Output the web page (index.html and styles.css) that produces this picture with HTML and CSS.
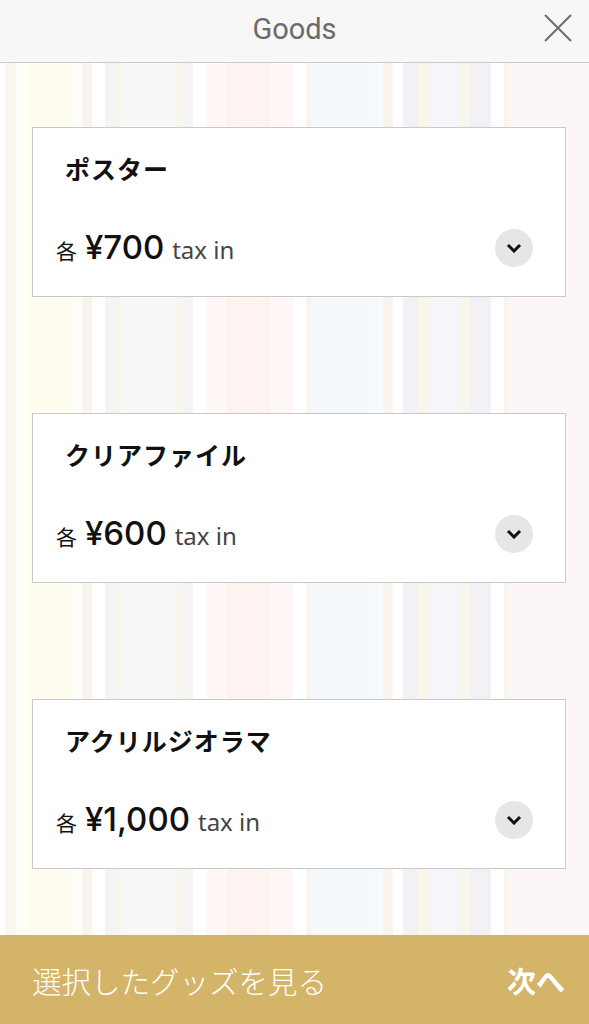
FILE: index.html
```html
<!DOCTYPE html>
<html lang="ja">
<head>
    <meta charset="UTF-8">
    <meta name="viewport" content="width=device-width, initial-scale=1.0">
    <title>Goods</title>
    <link rel="stylesheet" href="styles.css">
</head>
<body>
    <div class="page">
        <header class="top-bar">
            <h1>Goods</h1>
            <button class="close-btn" aria-label="close">
                <svg width="30" height="30" viewBox="0 0 30 30">
                    <path d="M2 2 L28 28 M28 2 L2 28" stroke="#6e6e6e" stroke-width="2" fill="none"/>
                </svg>
            </button>
        </header>

        <main class="goods-list">
            <div class="goods-card">
                <p class="goods-name">ポスター</p>
                <div class="price-row">
                    <p class="price"><span class="each">各</span> <span class="amount">¥700</span> <span class="tax">tax in</span></p>
                    <button class="toggle-btn" aria-label="open">
                        <svg width="16" height="10" viewBox="0 0 16 10">
                            <polyline points="2,2 8,8 14,2" stroke="#111" stroke-width="3" fill="none"/>
                        </svg>
                    </button>
                </div>
            </div>

            <div class="goods-card">
                <p class="goods-name">クリアファイル</p>
                <div class="price-row">
                    <p class="price"><span class="each">各</span> <span class="amount">¥600</span> <span class="tax">tax in</span></p>
                    <button class="toggle-btn" aria-label="open">
                        <svg width="16" height="10" viewBox="0 0 16 10">
                            <polyline points="2,2 8,8 14,2" stroke="#111" stroke-width="3" fill="none"/>
                        </svg>
                    </button>
                </div>
            </div>

            <div class="goods-card">
                <p class="goods-name">アクリルジオラマ</p>
                <div class="price-row">
                    <p class="price"><span class="each">各</span> <span class="amount">¥1,000</span> <span class="tax">tax in</span></p>
                    <button class="toggle-btn" aria-label="open">
                        <svg width="16" height="10" viewBox="0 0 16 10">
                            <polyline points="2,2 8,8 14,2" stroke="#111" stroke-width="3" fill="none"/>
                        </svg>
                    </button>
                </div>
            </div>
        </main>

        <footer class="bottom-bar">
            <span class="selected-link">選択したグッズを見る</span>
            <span class="next-link">次へ</span>
        </footer>
    </div>
</body>
</html>
```

FILE: styles.css
```css
body {
    margin: 0;
    font-family: "Noto Sans CJK JP", "Noto Sans", sans-serif;
    color: #111;
}
p {
    margin: 0;
}
button {
    border: none;
    padding: 0;
    background: none;
    cursor: pointer;
}
.page {
    display: flex;
    flex-direction: column;
    height: 100vh;
    overflow: hidden;
}

/* header */
.top-bar {
    position: relative;
    flex: 0 0 63px;
    box-sizing: border-box;
    display: flex;
    align-items: center;
    justify-content: center;
    padding-bottom: 5px;
    background-color: #f7f7f7;
    border-bottom: 1px solid #cbcbcb;
}
.top-bar h1 {
    margin: 0;
    font-family: Roboto, "Liberation Sans", sans-serif;
    font-size: 29px;
    font-weight: 400;
    color: #6b6b6b;
}
.close-btn {
    position: absolute;
    right: 16px;
    top: 13px;
    width: 30px;
    height: 30px;
}

/* list with striped background */
.goods-list {
    flex: 1;
    display: flex;
    flex-direction: column;
    gap: 116px;
    padding: 64px 23px 0 32px;
    background: linear-gradient(to right,
        #ffffff 0 5px, #f9f6ee 5px 16px, #fffef9 16px 27px, #fffcf0 27px 72px,
        #fffef9 72px 82px, #f9f5ee 82px 92px, #ffffff 92px 105px, #f4f4f4 105px 115px,
        #f8f5ef 115px 121px, #f8f8f8 121px 176px, #f9f6f0 176px 183px, #f4f4f4 183px 193px,
        #ffffff 193px 206px, #fff8f6 206px 227px, #f9f5ee 227px 232px, #fef3f0 232px 265px,
        #f9f5ee 265px 270px, #fff7f5 270px 293px, #ffffff 293px 306px, #f9f5ee 306px 311px,
        #f5f9fc 311px 373px, #f7fafd 373px 383px, #f9f5ee 383px 393px, #ffffff 393px 403px,
        #f3f1f6 403px 418px, #f8f5eb 418px 429px, #f6f5fa 429px 459px, #f8f5eb 459px 470px,
        #f3f1f6 470px 491px, #ffffff 491px 504px, #f9f5ee 504px 509px, #fdf6f6 509px 100%);
}
.goods-card {
    background-color: #fff;
    border: 1px solid #c9c9c9;
    padding: 22px 32px 28px 23px;
}
.goods-name {
    padding-left: 9px;
    font-size: 25px;
    font-weight: 700;
    line-height: 36px;
    letter-spacing: 1px;
}
.price-row {
    display: flex;
    align-items: center;
    justify-content: space-between;
    height: 40px;
    margin-top: 42px;
}
.price {
    font-size: 22px;
    line-height: 40px;
    word-spacing: 3px;
}
.each {
    font-size: 21px;
}
.amount {
    font-family: Inter, "Noto Sans", sans-serif;
    font-size: 33px;
    font-weight: 500;
}
.tax {
    font-family: "Noto Sans", sans-serif;
    font-size: 24px;
    color: #444;
    word-spacing: 0;
}
.toggle-btn {
    display: flex;
    align-items: center;
    justify-content: center;
    width: 38px;
    height: 38px;
    border-radius: 50%;
    background-color: #e6e6e6;
}

/* footer */
.bottom-bar {
    flex: 0 0 89px;
    display: flex;
    align-items: center;
    justify-content: space-between;
    padding: 0 24px 0 32px;
    background-color: #d4b469;
    color: #fff;
}
.selected-link {
    font-size: 29.5px;
    font-weight: 300;
}
.next-link {
    font-size: 29px;
    font-weight: 700;
}
```
